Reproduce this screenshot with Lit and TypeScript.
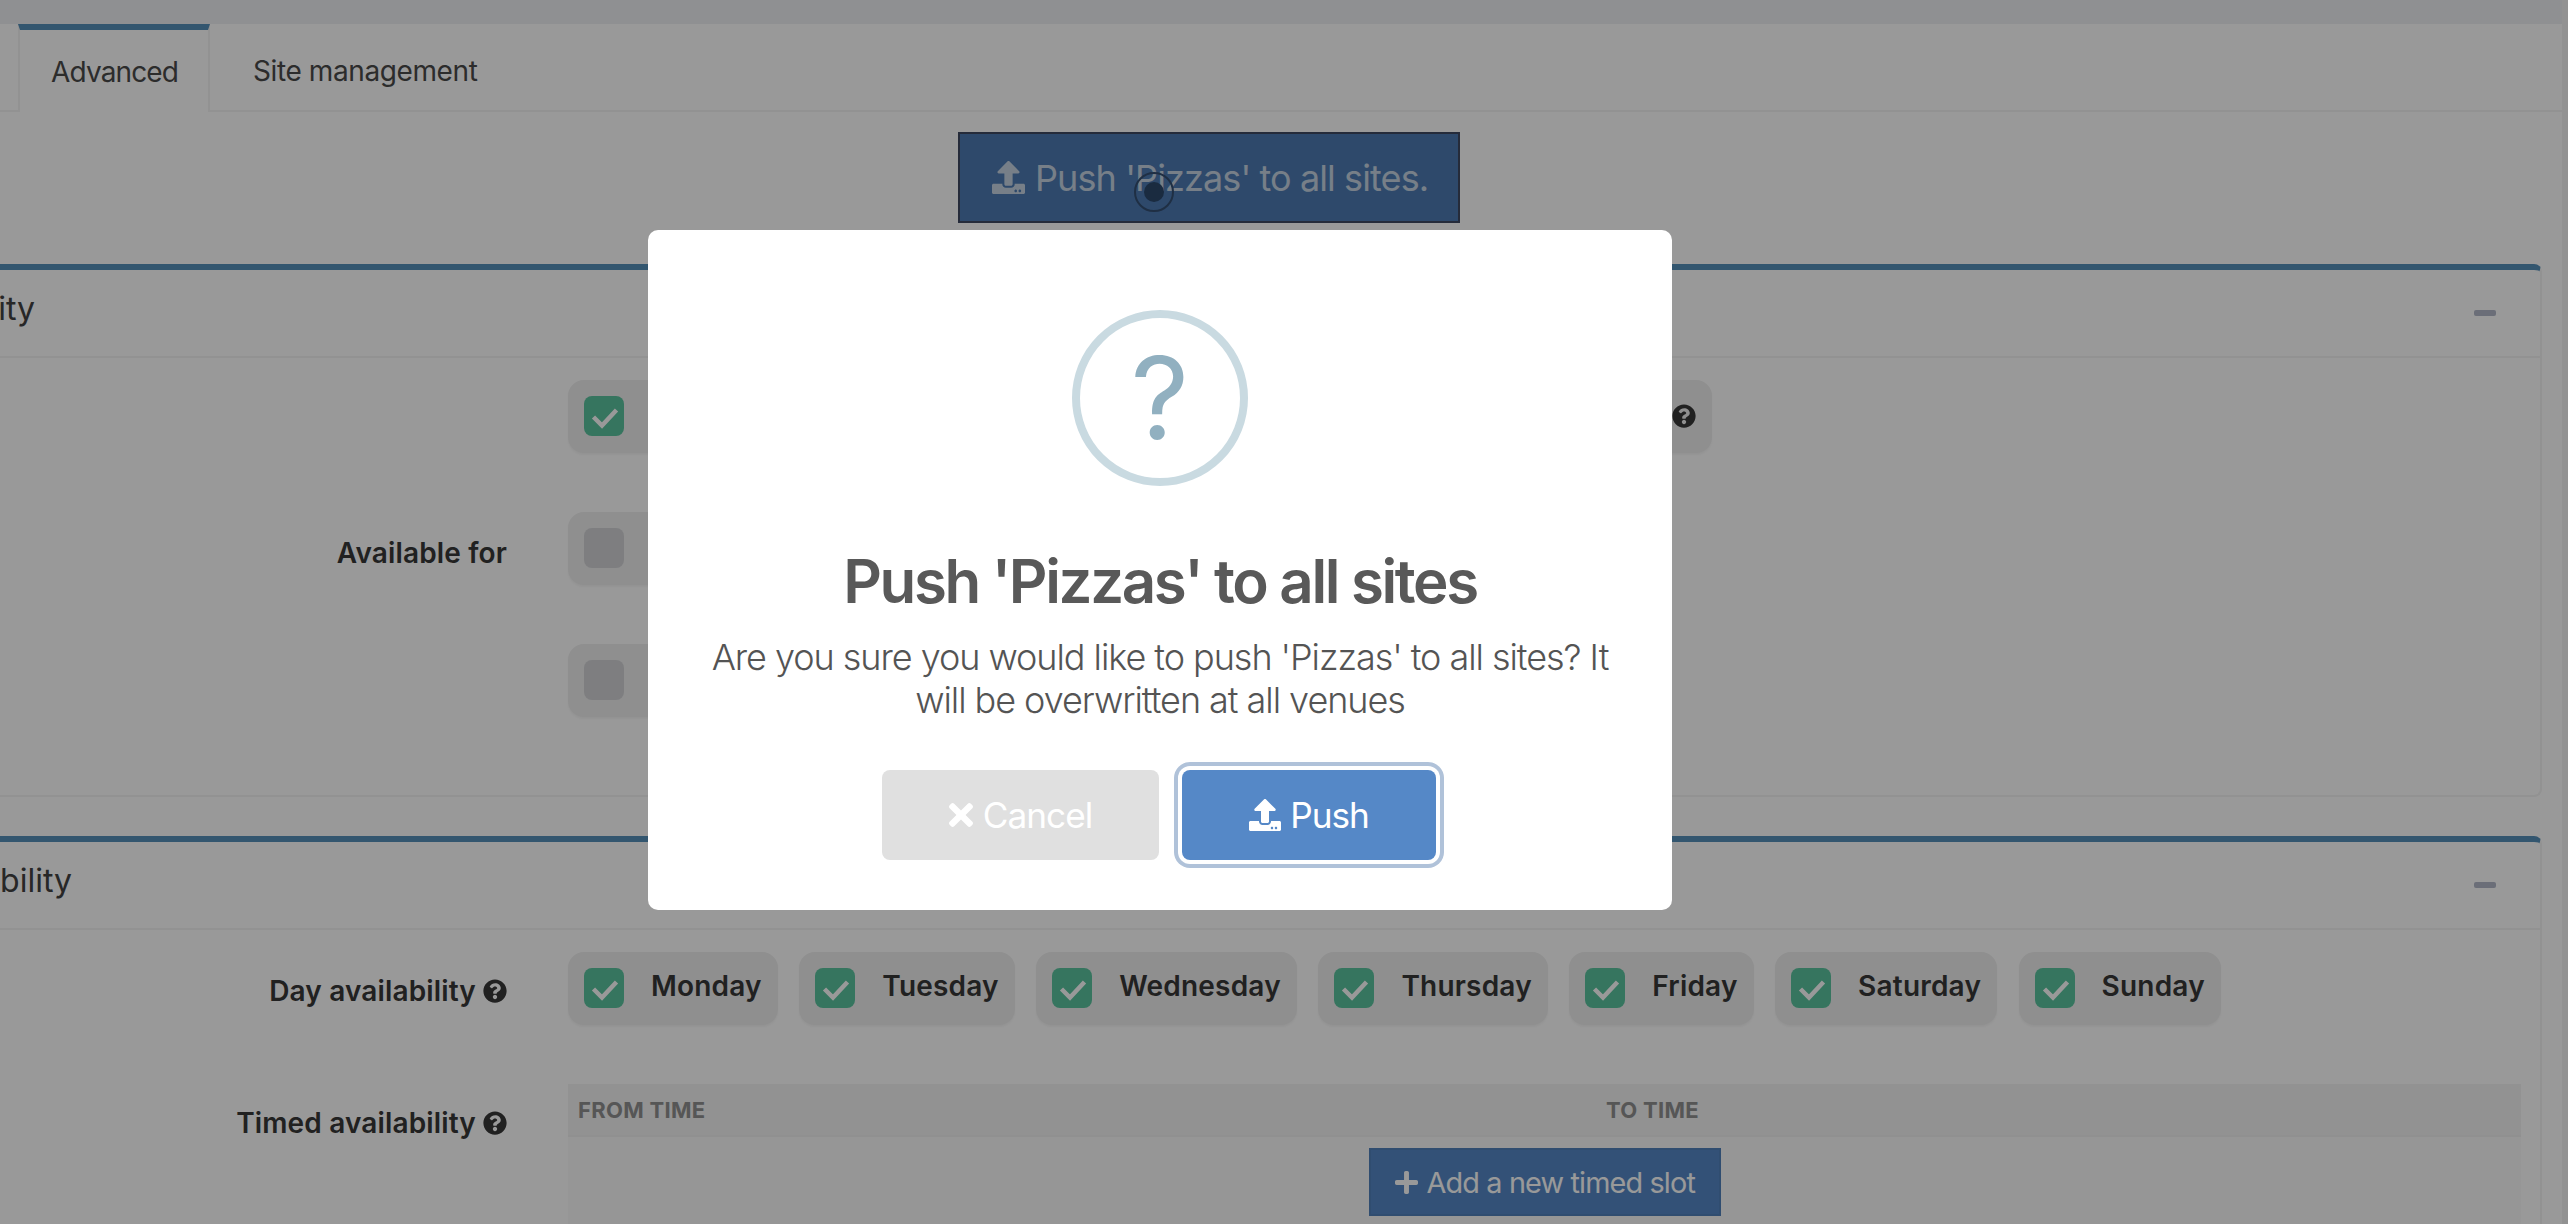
import { css, html, LitElement, svg } from 'lit';
import { customElement } from 'lit/decorators.js';

const UPLOAD = svg`<path d="M296 384h-80c-13.3 0-24-10.7-24-24V192h-87.7c-17.8 0-26.7-21.5-14.1-34.1L242.3 5.7c7.5-7.5 19.8-7.5 27.3 0l152.2 152.2c12.6 12.6 3.7 34.1-14.1 34.1H320v168c0 13.3-10.7 24-24 24zm216-8v112c0 13.3-10.7 24-24 24H24c-13.3 0-24-10.7-24-24V376c0-13.3 10.7-24 24-24h136v8c0 30.9 25.1 56 56 56h80c30.9 0 56-25.1 56-56v-8h136c13.3 0 24 10.7 24 24zm-124 88c0-11-9-20-20-20s-20 9-20 20 9 20 20 20 20-9 20-20zm64 0c0-11-9-20-20-20s-20 9-20 20 9 20 20 20 20-9 20-20z"/>`;
const QUESTION = svg`<path d="M504 256c0 136.997-111.043 248-248 248S8 392.997 8 256C8 119.083 119.043 8 256 8s248 111.083 248 248zM262.655 90c-54.497 0-89.255 22.957-116.549 63.758-3.536 5.286-2.353 12.415 2.715 16.258l34.699 26.31c5.205 3.947 12.621 3.008 16.665-2.122 17.864-22.658 30.113-35.797 57.303-35.797 20.429 0 45.698 13.148 45.698 32.958 0 14.976-12.363 22.667-32.534 33.976C247.128 238.528 216 254.941 216 296v4c0 6.627 5.373 12 12 12h56c6.627 0 12-5.373 12-12v-1.333c0-28.462 83.186-29.647 83.186-106.667 0-58.002-60.165-102-116.531-102zM256 338c-25.365 0-46 20.635-46 46 0 25.364 20.635 46 46 46s46-20.636 46-46c0-25.365-20.635-46-46-46z"/>`;
const PLUS = svg`<path d="M416 208H272V64c0-17.67-14.33-32-32-32h-32c-17.67 0-32 14.33-32 32v144H32c-17.67 0-32 14.33-32 32v32c0 17.67 14.33 32 32 32h144v144c0 17.67 14.33 32 32 32h32c17.67 0 32-14.33 32-32V304h144c17.67 0 32-14.33 32-32v-32c0-17.67-14.33-32-32-32z"/>`;
const TIMES = svg`<path d="M242.72 256l100.07-100.07c12.28-12.28 12.28-32.19 0-44.48l-22.24-22.24c-12.28-12.28-32.19-12.28-44.48 0L176 189.28 75.93 89.21c-12.28-12.28-32.19-12.28-44.48 0L9.21 111.45c-12.28 12.28-12.28 32.19 0 44.48L109.28 256 9.21 356.07c-12.28 12.28-12.28 32.19 0 44.48l22.24 22.24c12.28 12.28 32.2 12.28 44.48 0L176 322.72l100.07 100.07c12.28 12.28 32.2 12.28 44.48 0l22.24-22.24c12.28-12.28 12.28-32.19 0-44.48L242.72 256z"/>`;

const DAYS = ['Monday', 'Tuesday', 'Wednesday', 'Thursday', 'Friday', 'Saturday', 'Sunday'];

@customElement('app-root')
export class AppRoot extends LitElement {
  static styles = css`
    :host {
      display: block;
      position: relative;
      width: 2568px;
      height: 1224px;
      overflow: hidden;
      background: #fff;
      font-family: Inter, 'Noto Sans', sans-serif;
      color: #373737;
    }
    svg { fill: currentColor; display: block; flex: none; }

    .layout { display: flex; height: 100%; }
    .main { flex: 1; min-width: 0; }
    .scrollbar { width: 6px; background: #f3f3f3; }

    .topbar { height: 24px; background: #eef0f3; }
    .tabs {
      display: flex;
      height: 86px;
      padding-left: 18px;
      border-bottom: 2px solid #f3f3f3;
      font-size: 28px;
      letter-spacing: -0.4px;
    }
    .tab { padding: 0 33px; line-height: 95px; color: #4a4a4a; white-space: nowrap; }
    .tab.active {
      box-sizing: border-box;
      width: 192px;
      height: 88px;
      border-top: 6px solid #558fb9;
      border-left: 2px solid #f3f3f3;
      border-right: 2px solid #f3f3f3;
      background: #fff;
      padding: 0 31px;
      line-height: 85px;
      letter-spacing: -0.85px;
    }
    .tab.next { padding-left: 43px; }

    .content {
      display: flex;
      flex-direction: column;
      margin: 20px 20px 0 -124px;
    }
    .push-all {
      align-self: center;
      box-sizing: border-box;
      display: flex;
      align-items: center;
      gap: 10px;
      width: 502px;
      height: 91px;
      padding: 0 32px;
      background: #4d7bb2;
      border: 2px solid #3e4961;
      color: #c6d4e3;
      font-size: 36px;
      letter-spacing: -0.9px;
      white-space: nowrap;
    }
    .push-all svg { width: 33px; height: 33px; }

    .card {
      margin-top: 41px;
      border: 2px solid #f3f3f3;
      border-top: 6px solid #558fb9;
      border-radius: 8px;
      background: #fff;
    }
    .card.second { margin-top: 39px; }
    .card-header {
      display: flex;
      align-items: center;
      justify-content: space-between;
      height: 86px;
      padding-right: 44px;
      border-bottom: 2px solid #f3f3f3;
      font-size: 32px;
      color: #424242;
    }
    .card-title { padding-bottom: 9px; text-align: right; white-space: nowrap; direction: rtl; }
    .card-title.first { width: 157px; }
    .card-title.wide { width: 194px; }
    .minus { width: 22px; height: 6px; border-radius: 2px; background: #b2b7c8; }

    .row {
      display: grid;
      grid-template-columns: 629px 1fr;
      column-gap: 61px;
      padding-right: 19px;
    }
    .card-body { padding-top: 22px; }
    .first-body { padding-bottom: 78px; }
    .field-label {
      display: flex;
      align-items: center;
      justify-content: flex-end;
      gap: 7px;
      height: 40px;
      margin-top: 19px;
      font-size: 28px;
      font-weight: 600;
      letter-spacing: 0.15px;
      color: #373737;
      white-space: nowrap;
    }
    .field-label svg { width: 24px; height: 24px; }
    .field-label.centered { align-self: center; margin-top: 8px; }
    .options { display: flex; flex-direction: column; gap: 59px; }
    .days { display: flex; gap: 21.5px; margin-bottom: 59px; }

    .chip {
      box-sizing: border-box;
      display: flex;
      align-items: center;
      gap: 27px;
      height: 73px;
      padding: 0 16px 1px 16px;
      border-radius: 16px;
      background: #eeeeee;
      box-shadow: 0 2px 2px rgba(0, 0, 0, 0.04);
      font-size: 28px;
      font-weight: 600;
      letter-spacing: 0.2px;
      color: #373737;
    }
    .chip span.day { padding-bottom: 5px; }
    .chip.wide-option { width: 1144px; justify-content: space-between; padding-right: 16px; }
    .chip.short-option { width: 300px; }
    .chip svg.help { width: 24px; height: 24px; }
    .box { width: 40px; height: 40px; border-radius: 8px; background: #d2d3d6; flex: none; }
    .box.on { background: #5ac39e; }
    .box svg { width: 40px; height: 40px; fill: none; stroke: #fff; stroke-width: 4.5; }

    .table { background: #fbfbfb; height: 300px; }
    .table-head {
      display: grid;
      grid-template-columns: 1028px 1fr;
      box-sizing: border-box;
      height: 53px;
      padding: 0 10px;
      background: #f3f3f3;
      border-bottom: 2px solid #f1f1f1;
      line-height: 52px;
      font-size: 22px;
      font-weight: 700;
      letter-spacing: 0.3px;
      color: #8f8f8f;
    }
    .table-body { display: flex; justify-content: center; padding-top: 11px; }
    .add-slot {
      box-sizing: border-box;
      display: flex;
      align-items: center;
      gap: 9px;
      width: 352px;
      height: 68px;
      padding: 0 24px;
      background: #5588c7;
      border: 2px solid #5080bb;
      color: #fff;
      font-size: 28.8px;
      letter-spacing: -0.85px;
      white-space: nowrap;
    }
    .add-slot svg { width: 23px; height: 23px; }

    .overlay { position: absolute; inset: 0; background: rgba(0, 0, 0, 0.4); }
    .cursor {
      position: absolute;
      left: 1134px;
      top: 172px;
      box-sizing: border-box;
      display: flex;
      align-items: center;
      justify-content: center;
      width: 40px;
      height: 40px;
      border: 2px solid #1f2f44;
      border-radius: 50%;
    }
    .cursor span { width: 20px; height: 20px; border-radius: 50%; background: #1a2b40; }

    .modal {
      position: absolute;
      left: 648px;
      top: 230px;
      box-sizing: border-box;
      display: flex;
      flex-direction: column;
      align-items: center;
      width: 1024px;
      height: 680px;
      padding: 80px 40px 50px;
      border-radius: 10px;
      background: #fff;
      text-align: center;
    }
    .q-icon {
      box-sizing: border-box;
      flex: none;
      width: 176px;
      height: 176px;
      border: 8px solid #c9dae1;
      border-radius: 50%;
      color: #91b0c0;
      font-size: 114px;
      line-height: 160px;
    }
    h2 {
      margin: 59px 0 0;
      font-size: 60px;
      line-height: 72px;
      font-weight: 600;
      letter-spacing: -2.35px;
      color: #595959;
    }
    p {
      margin: 19px 0 0;
      font-size: 36px;
      line-height: 43px;
      font-weight: 300;
      letter-spacing: -1.05px;
      color: #545454;
    }
    .actions { display: flex; gap: 23px; margin: 48px 2px 0 0; }
    .btn {
      box-sizing: border-box;
      display: flex;
      align-items: center;
      justify-content: center;
      height: 90px;
      border-radius: 8px;
      color: #fff;
      font-size: 35.2px;
      letter-spacing: -1px;
    }
    .btn.cancel { gap: 10px; width: 277px; background: #e0e0e0; }
    .btn.cancel svg { width: 24px; height: 24px; }
    .btn.push {
      gap: 9px;
      width: 254px;
      background: #5588c7;
      box-shadow: 0 0 0 4px #fff, 0 0 0 8px #b0c2d9;
    }
    .btn.push svg { width: 32px; height: 32px; }
  `;

  private icon(body: unknown, box: string, cls = '') {
    return html`<svg class=${cls} viewBox=${box}>${body}</svg>`;
  }

  private checkbox(on: boolean) {
    return html`<span class="box ${on ? 'on' : ''}">
      ${on ? html`<svg viewBox="0 0 40 40"><polyline points="9.5,21 18,29.5 32.5,14"></polyline></svg>` : ''}
    </span>`;
  }

  render() {
    return html`
      <div class="layout">
        <div class="main">
          <div class="topbar"></div>
          <div class="tabs">
            <div class="tab active">Advanced</div>
            <div class="tab next">Site management</div>
          </div>
          <div class="content">
            <div class="push-all">${this.icon(UPLOAD, '0 0 512 512')}Push 'Pizzas' to all sites.</div>

            <section class="card">
              <div class="card-header">
                <div class="card-title first">Availability</div>
                <div class="minus"></div>
              </div>
              <div class="card-body first-body row">
                <div class="field-label centered">Available for</div>
                <div class="options">
                  <div class="chip wide-option">
                    ${this.checkbox(true)}
                    ${this.icon(QUESTION, '0 0 512 512', 'help')}
                  </div>
                  <div class="chip short-option">${this.checkbox(false)}</div>
                  <div class="chip short-option">${this.checkbox(false)}</div>
                </div>
              </div>
            </section>

            <section class="card second">
              <div class="card-header">
                <div class="card-title wide">Availability</div>
                <div class="minus"></div>
              </div>
              <div class="card-body row">
                <div class="field-label">Day availability ${this.icon(QUESTION, '0 0 512 512')}</div>
                <div class="days">
                  ${DAYS.map((d) => html`<div class="chip">${this.checkbox(true)}<span class="day">${d}</span></div>`)}
                </div>
                <div class="field-label">Timed availability ${this.icon(QUESTION, '0 0 512 512')}</div>
                <div class="table">
                  <div class="table-head"><span>FROM TIME</span><span>TO TIME</span></div>
                  <div class="table-body">
                    <div class="add-slot">${this.icon(PLUS, '0 32 448 448')}Add a new timed slot</div>
                  </div>
                </div>
              </div>
            </section>
          </div>
        </div>
        <div class="scrollbar"></div>
      </div>

      <div class="overlay"></div>
      <div class="cursor"><span></span></div>

      <div class="modal">
        <div class="q-icon">?</div>
        <h2>Push 'Pizzas' to all sites</h2>
        <p>Are you sure you would like to push 'Pizzas' to all sites? It will be overwritten at all venues</p>
        <div class="actions">
          <div class="btn cancel">${this.icon(TIMES, '0 80 352 352')}Cancel</div>
          <div class="btn push">${this.icon(UPLOAD, '0 0 512 512')}Push</div>
        </div>
      </div>
    `;
  }
}
